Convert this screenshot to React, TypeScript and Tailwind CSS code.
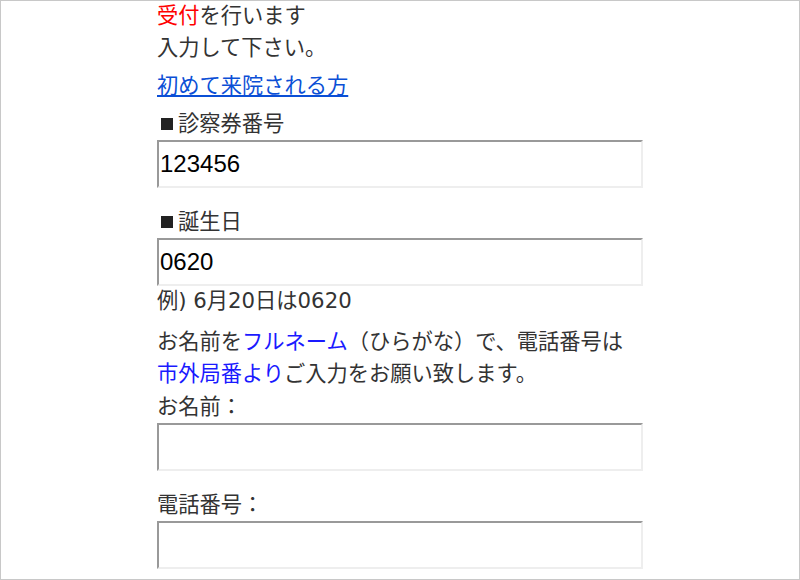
import React from "react";

const inputClass =
  "block w-[486px] h-[48px] px-[1px] text-[24px] text-black bg-white outline-none border-2 border-t-[#999999] border-l-[#999999] border-r-[#eeeeee] border-b-[#eeeeee] font-['Liberation_Sans',Arial,sans-serif]";

function Mark() {
  return <span className="inline-block w-[12px] h-[12px] bg-[#222222] ml-[4px] mr-[5px] align-[1px]" />;
}

export default function App() {
  return (
    <div className="w-[800px] h-[580px] box-border border border-[#c8c8c8] bg-white overflow-hidden">
      <div className="pl-[156px] -mt-[1px] text-[21.25px] leading-[32px] text-[#333333] font-['DejaVu_Sans','Noto_Sans_CJK_JP',sans-serif]">
        <p>
          <span className="text-[#ff0000]">受付</span>を行います
        </p>
        <p>入力して下さい。</p>
        <p className="mt-[6px]">
          <a href="#" className="text-[#0b4fd6] underline underline-offset-2">
            初めて来院される方
          </a>
        </p>
        <form className="mt-[6px]" onSubmit={(e) => e.preventDefault()}>
          <label className="block">
            <span className="block">
              <Mark />診察券番号
            </span>
            <input className={inputClass} defaultValue="123456" />
          </label>

          <label className="block mt-[18px]">
            <span className="block">
              <Mark />誕生日
            </span>
            <input className={inputClass} defaultValue="0620" />
          </label>
          <p className="mt-[-1px]">例) 6月20日は0620</p>

          <p className="mt-[9px]">
            お名前を<span className="text-[#1a1aff]">フルネーム</span>（ひらがな）で、電話番号は
            <br />
            <span className="text-[#1a1aff]">市外局番より</span>ご入力をお願い致します。
          </p>
          <label className="block mt-[1px]">
            <span className="block">お名前：</span>
            <input className={inputClass} />
          </label>

          <label className="block mt-[18px]">
            <span className="block">電話番号：</span>
            <input className={inputClass} />
          </label>
        </form>
      </div>
    </div>
  );
}
